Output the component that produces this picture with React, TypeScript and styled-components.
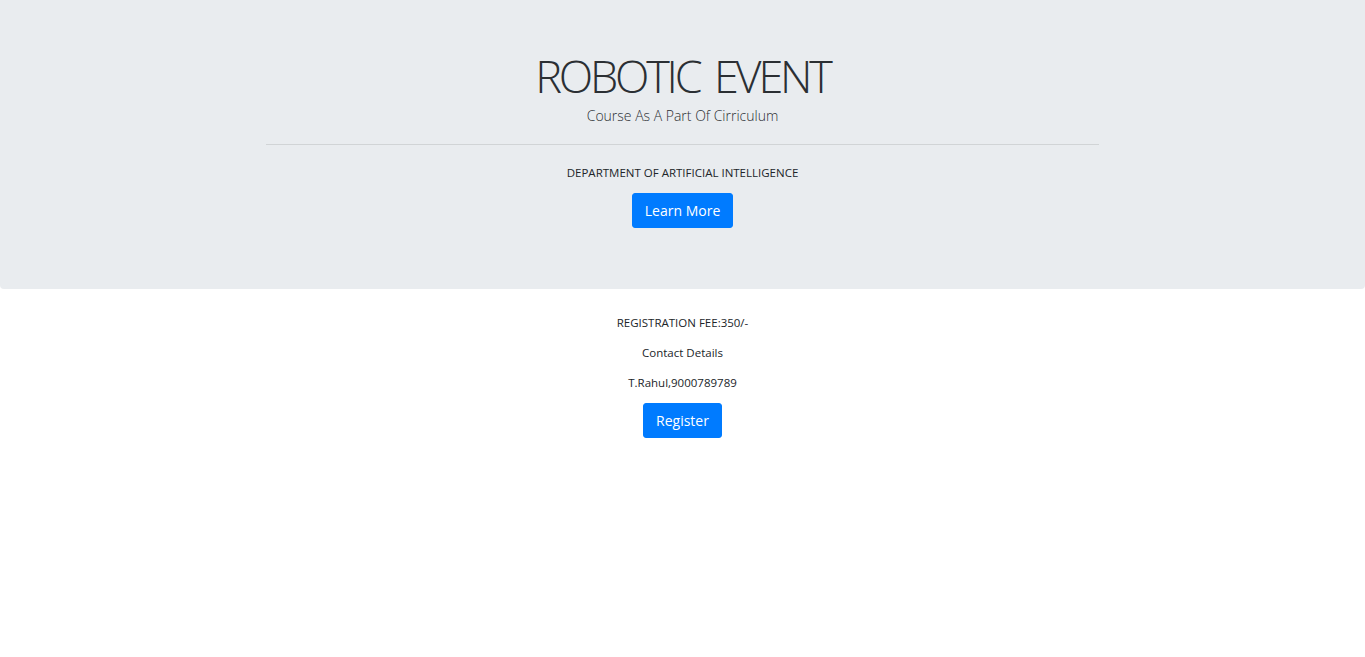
import styled, { createGlobalStyle } from 'styled-components';

const GlobalStyle = createGlobalStyle`
  body {
    margin: 0;
    font-family: "Open Sans", "Noto Sans", sans-serif;
    color: #212529;
    background: #fff;
  }
`;

const Jumbotron = styled.section`
  display: flex;
  flex-direction: column;
  align-items: center;
  background-color: #e9ecef;
  border-radius: 0 0 4px 4px;
  padding: 47px 0 61px 0;
`;

const Title = styled.h1`
  margin: 0;
  font-size: 45px;
  font-weight: 300;
  line-height: 58px;
  letter-spacing: -3.2px;
  word-spacing: 6px;
  color: #2b2f33;
`;

const Lead = styled.p`
  margin: 1px 0 0 0;
  font-size: 14px;
  font-weight: 300;
  line-height: 20px;
  color: #2b2f33;
`;

const Divider = styled.hr`
  width: 833px;
  margin: 18px 0 17px 0;
  border: 0;
  border-top: 1px solid rgba(0, 0, 0, 0.1);
`;

const Text = styled.p<{ $gap?: number }>`
  margin: ${(p) => p.$gap ?? 0}px 0 0 0;
  font-size: 11.5px;
  line-height: 20px;
`;

const Button = styled.button<{ $top: number }>`
  margin-top: ${(p) => p.$top}px;
  height: 35px;
  padding: 0 12px;
  border: 1px solid #007bff;
  border-radius: 3px;
  background-color: #007bff;
  color: #fff;
  font-family: "Open Sans", "Noto Sans", sans-serif;
  font-size: 14px;
  line-height: 33px;
  cursor: pointer;
`;

const Details = styled.div`
  display: flex;
  flex-direction: column;
  align-items: center;
  padding-top: 24px;
`;

export default function App() {
  return (
    <>
      <GlobalStyle />
      <Jumbotron>
        <Title>ROBOTIC EVENT</Title>
        <Lead>Course As A Part Of Cirriculum</Lead>
        <Divider />
        <Text $gap={1}>DEPARTMENT OF ARTIFICIAL INTELLIGENCE</Text>
        <Button $top={10}>Learn More</Button>
      </Jumbotron>
      <Details>
        <Text>REGISTRATION FEE:350/-</Text>
        <Text $gap={10}>Contact Details</Text>
        <Text $gap={10}>T.Rahul,9000789789</Text>
        <Button $top={10}>Register</Button>
      </Details>
    </>
  );
}
